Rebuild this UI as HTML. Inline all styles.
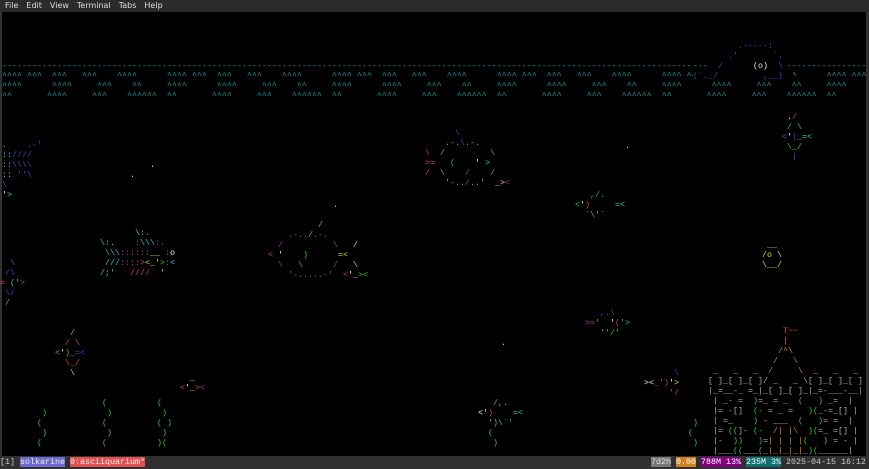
<!DOCTYPE html>
<html><head><meta charset="utf-8"><style>
body{margin:0;width:869px;height:469px;background:#000;overflow:hidden;position:relative;font-family:"Liberation Mono",monospace}
#menu{position:absolute;left:0;top:0;width:869px;height:12px;background:#2b2b2b;color:#ddd;font:8px "DejaVu Sans",sans-serif;line-height:12px}
#menu span{margin-left:5px;margin-right:3px}
pre{position:absolute;margin:0;font-size:8.33px;line-height:10px;white-space:pre;font-family:"Liberation Mono",monospace}
.w{color:#1fa0a0}
#bar{position:absolute;left:0;top:456px;width:869px;height:13px;background:#303030;color:#ccc;font-size:8.33px;line-height:13px;font-family:"Liberation Mono",monospace;white-space:pre;overflow:hidden}
.g{color:#3c3}.y{color:#dd3}.m{color:#a3a}.c{color:#3cc}.r{color:#d44}.b{color:#44c}.o{color:#c83}.wh{color:#eee}.gr{color:#aaa}
</style></head><body>
<div id="menu"><span>File</span><span>Edit</span><span>View</span><span>Terminal</span><span>Tabs</span><span>Help</span></div>
<div style="position:absolute;left:0;top:12px;width:2px;height:444px;background:#333"></div>
<div style="position:absolute;left:866px;top:12px;width:3px;height:444px;background:#333"></div>
<div style="position:absolute;left:2px;top:12px;width:864px;height:444px;overflow:hidden">
<pre class="w" style="left:0px;top:49px">-------------------------------------------------------------------------------------------------------------------------------------------------------------------------------------------
^^^^ ^^^  ^^^   ^^^    ^^^^      ^^^^ ^^^  ^^^   ^^^    ^^^^      ^^^^ ^^^  ^^^   ^^^    ^^^^      ^^^^ ^^^  ^^^   ^^^    ^^^^      ^^^^ ^^^  ^^^   ^^^    ^^^^      ^^^^ ^^^  ^^^   ^^^    ^^^^      
^^^^      ^^^^     ^^^    ^^     ^^^^      ^^^^     ^^^    ^^     ^^^^      ^^^^     ^^^    ^^     ^^^^      ^^^^     ^^^    ^^     ^^^^      ^^^^     ^^^    ^^     ^^^^      ^^^^     ^^^    ^^     
^^       ^^^^     ^^^    ^^^^^^  ^^       ^^^^     ^^^    ^^^^^^  ^^       ^^^^     ^^^    ^^^^^^  ^^       ^^^^     ^^^    ^^^^^^  ^^       ^^^^     ^^^    ^^^^^^  ^^       ^^^^     ^^^    ^^^^^^  </pre>
</div>
<pre class="b" style="left:693px;top:41px"><span style="background:#000">         .-----:    </span>
<span style="background:#000">       .'       `.  </span>
<span class="w" style="background:#000">---</span><span style="background:#000">  /      <span class="wh">(o)</span>  \ </span>
<span style="background:#000">(`._/         ,__)  </span></pre>
<pre style="left:2px;top:140px"><span class="c">.</span>    <span class="b">.-'</span>
<span class="c">::</span><span class="b">////</span>
<span class="c">::</span><span class="b">\\\\</span>
<span class="c">::</span> <span class="b">''\</span>
<span class="b">\</span>
<span class="wh">'</span><span class="c">&gt;</span></pre>
<pre style="left:100px;top:228px"><span class="c">       \:.</span>
<span class="c">\:.  </span><span class="m">  :</span><span class="c">\\\</span><span class="m">:.</span>
<span class="c"> \\\</span><span class="m">::::::</span><span class="y">__ </span><span class="m">:</span><span class="wh">o</span>
<span class="c"> ///</span><span class="m">::::</span><span class="r">&gt;</span><span class="y">&lt;_'</span><span class="g">&gt;</span><span class="m">:</span><span class="c">&lt;</span>
<span class="c">/;'</span> <span class="r">  ////</span><span class="y">  '</span></pre>
<pre class="m" style="left:258px;top:220px">            <span class="c">/</span>
      .-..<span class="c">/</span>.-.
    /          \   <span class="y">/</span>
  <span class="r">&lt;</span> <span class="wh">'</span>    <span class="g">)</span>      <span class="y">=&lt;</span>
    \   <span class="g">\</span>      /   <span class="y">\</span>
      '-.....-'  <span class="r">&lt;</span><span class="wh">'</span><span class="y">_</span><span class="g">&gt;&lt;</span></pre>
<pre class="o" style="left:420px;top:128px">       <span class="b">\</span>
     .-.<span class="b">\</span>.-.
 <span class="r">\</span>  /         \
 <span class="r">&gt;=</span>   <span class="g">(</span>    <span class="wh">'</span> <span class="c">&gt;</span>
 <span class="r">/</span>  \    <span class="m">/</span>    /
     '-..<span class="m">/</span>..'  <span class="y">_&gt;</span><span class="m">&lt;</span></pre>
<pre style="left:575px;top:190px"><span class="g">   ,/.</span>
<span class="g">&lt;</span><span class="wh">'</span><span class="r">)</span>     <span class="c">=&lt;</span>
<span class="g">  `</span><span class="c">\</span><span class="g">'`</span></pre>
<pre style="left:782px;top:112px"><span class="wh"> .</span><span class="r">/</span>
<span class="g"> / \</span>
<span class="m">&lt;</span><span class="wh">'</span><span class="b">|</span><span class="g">_</span><span class="c">=&lt;</span>
<span class="g"> \_/</span>
<span class="b">  |</span></pre>
<pre class="y" style="left:762px;top:240px"> __
/o \
\__/</pre>
<pre style="left:0px;top:258px"><span class="m">  \</span>
<span class="b"> /\</span>
<span class="r">=</span> <span class="c">('</span><span class="m">&gt;</span>
<span class="b"> \/</span>
<span class="o"> /</span></pre>
<pre style="left:585px;top:308px"><span class="b">   ,.\</span>
<span class="m">&gt;=</span><span class="g">'  </span><span class="wh">'</span><span class="r">(</span><span class="g">'&gt;</span>
<span class="g">   ''/'</span></pre>
<pre style="left:55px;top:328px"><span class="c">   /</span>
<span class="r">  / \</span>
<span class="g">&lt;</span><span class="wh">'</span><span class="g">)</span><span class="r">_</span><span class="b">=&lt;</span>
<span class="r">  \_/</span>
<span class="y">   \</span></pre>
<pre style="left:180px;top:373px"><span class="y">  _</span>
<span class="r">&lt;</span><span class="wh">'</span><span class="y">_</span><span class="r">&gt;</span><span class="m">&lt;</span></pre>
<pre style="left:644px;top:368px"><span class="b">      \</span>
<span class="wh">&gt;&lt;</span><span class="r">_'</span><span class="m">)</span><span class="wh">'</span><span class="y">&gt;</span>
<span class="r">     '/</span></pre>
<pre style="left:478px;top:398px"><span class="g">   /,.</span>
<span class="wh">&lt;'</span><span class="r">)</span>    <span class="c">=&lt;</span>
<span class="g">  '`</span><span class="c">\</span><span class="g">`'</span></pre>
<pre class="gr" style="left:708px;top:326px">               <span class="r">T~~</span>
               <span class="o">|</span>
              <span class="o">/^\</span>
             <span class="o">/   \</span>
 _   _   _  <span class="o">/     \</span>  _   _   _
[ ]_[ ]_[ ]/ _   _ \[ ]_[ ]_[ ]
|_=__-_ =_|_[ ]_[ ]_|_=-___-__|
 | _- =  <span class="g">)</span>=_ = _  <span class="g">(   )</span> _=  |
 |= -[]  <span class="g">(-</span> = _ =   <span class="g">)(</span>_-=_[] |
 | =_    <span class="g">)</span> - ___  <span class="g">(   )</span>= =  |
 |= <span class="g">((</span>]- <span class="g">(-</span>  <span class="o">/| |\</span>  <span class="g">)(</span>=_ =[] |
 |-  <span class="g">))</span>   <span class="g">)</span>=<span class="o">| | | |</span><span class="g">(   )</span> = - |
 |___<span class="g">((</span>___<span class="g">(</span>_<span class="o">|_|_|_|</span>_<span class="g">)(</span>______|</pre>
<pre class="g" style="left:32px;top:398px">              (          (
  )            )          )
 (            (          ( )
  )            )          )
 (            (          )(</pre>
<pre class="g" style="left:488px;top:418px"> )
(
 )</pre>
<pre class="g" style="left:688px;top:418px"> )
(
 )</pre>
<pre class="wh" style="left:150px;top:160px">.</pre>
<pre class="y" style="left:130px;top:170px">.</pre>
<pre class="y" style="left:333px;top:200px">.</pre>
<pre class="y" style="left:625px;top:141px">.</pre>
<pre class="y" style="left:501px;top:338px">.</pre>
<div id="bar"><span>[1]</span> <span style="background:#6a6ad0;color:#eee">solkarine</span> <span style="background:#e05050;color:#fee">0:asciiquarium*</span><span style="position:absolute;left:651px;top:0"><span style="background:#777;color:#ddd">7d2h</span> <span style="background:#d08020;color:#fff">0.00</span> <span style="background:#800080;color:#fff">788M 13%</span> <span style="background:#107070;color:#fff">235M 3%</span> 2025-04-15 16:12</span></div>
</body></html>
